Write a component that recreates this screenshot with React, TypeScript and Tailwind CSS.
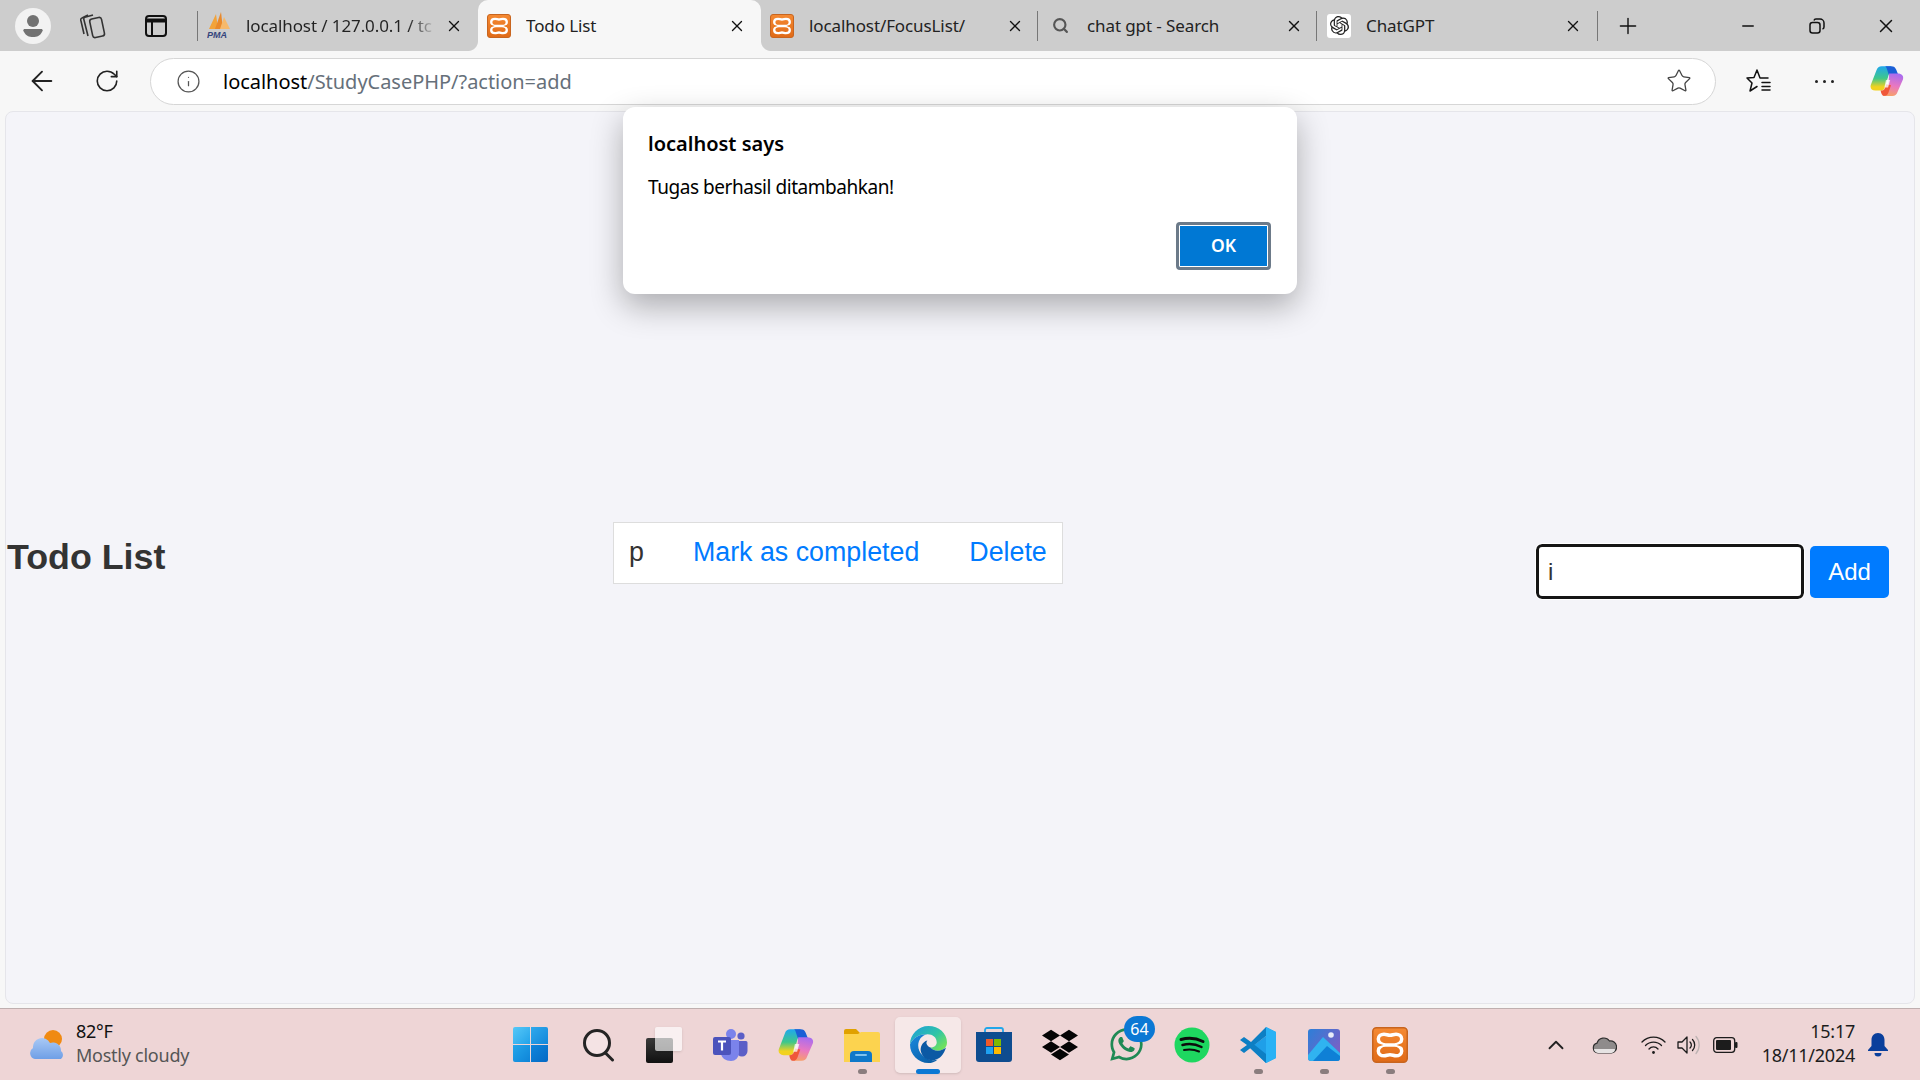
import { ArrowLeft, ChevronUp, Info, Minus, Plus, RotateCw, Search, Star, X } from "lucide-react";
import { FaDropbox, FaWhatsapp } from "react-icons/fa";
import { SiOpenai } from "react-icons/si";

const ui = "font-['Noto_Sans',sans-serif]";

const Xampp = ({ size = 24 }: { size?: number }) => (
  <svg width={size} height={size} viewBox="0 0 24 24">
    <defs>
      <linearGradient id="xampp-bg" x1="0" y1="0" x2="0" y2="1">
        <stop offset="0" stopColor="#f58a33" />
        <stop offset="1" stopColor="#e06a17" />
      </linearGradient>
    </defs>
    <rect x="0.5" y="0.5" width="23" height="23" rx="2.5" fill="url(#xampp-bg)" stroke="#c8651f" />
    <path
      d="M9 12C6 12 4.200 10 4.200 8 4.200 6 6 4.800 8 4.800c1.500 0 2.500.7 4 .7s2.500-.7 4-.7c2 0 3.800 1.200 3.800 3.200 0 2-1.800 4-4.800 4 3 0 4.800 2 4.800 4 0 2-1.800 3.200-3.800 3.200-1.500 0-2.500-.7-4-.7s-2.500.7-4 .7c-2 0-3.800-1.200-3.800-3.200 0-2 1.800-4 4.800-4Zm0 0h6"
      fill="none"
      stroke="#fff"
      strokeWidth="2.300"
      strokeLinejoin="round"
    />
    <path d="M2.500 10.300 7.600 12l-5.100 1.700ZM21.500 10.300 16.400 12l5.100 1.700Z" fill="#ea7a22" />
  </svg>
);

const Pma = () => (
  <svg width="24" height="30" viewBox="0 0 24 30">
    <path d="M2 18 9 3l2 15Z" fill="#f2a33a" />
    <path d="M8 18 14 1l2 17Z" fill="#e9892b" />
    <path d="M13 18 17 6l6 12Z" fill="#f6b96b" />
    <text x="0" y="27" fontSize="9" fontWeight="700" fontStyle="italic" fill="#35457c" fontFamily="Liberation Sans">PMA</text>
  </svg>
);

const Copilot = ({ size = 30, id }: { size?: number; id: string }) => (
  <svg width={size} height={size} viewBox="0 0 32 32">
    <defs>
      <linearGradient id={`${id}-a`} x1="0.4" y1="0" x2="0.4" y2="1">
        <stop offset="0" stopColor="#1fa7ee" />
        <stop offset="0.5" stopColor="#3fc78a" />
        <stop offset="0.85" stopColor="#f2d21f" />
      </linearGradient>
      <linearGradient id={`${id}-b`} x1="0.6" y1="0" x2="0.4" y2="1">
        <stop offset="0" stopColor="#a86cf0" />
        <stop offset="0.55" stopColor="#ea78c0" />
        <stop offset="1" stopColor="#f7a06a" />
      </linearGradient>
    </defs>
    <path d="M11 2h9l-6 20c-.8 2.500-2 3-4 3H5c-3.500 0-5.200-2.500-4.200-5.500L6 6c1-3 2.500-4 5-4Z" fill={`url(#${id}-a)`} />
    <path d="M14 2h6c2.500 0 3.800 1 4.600 3.200L27 11h-9l-2-6c-.4-1.500-1-3-2-3Z" fill="#1b5fd6" />
    <path d="M18 9h8c4 0 6 2.500 5 5.500L26 26c-1 3-2.500 4-5 4H12c2.500 0 4-1.500 4.800-4Z" fill={`url(#${id}-b)`} />
    <path d="M10 25c2.500 0 3.600-1 4.300-3l1-3 4.500 1-2.500 7c-.8 2.200-2 3-4.300 3-1.500 0-2.500-2-3-5Z" fill="#f0583a" />
    <path d="M15 15h4l-2 7h-3.500Z" fill="#fff" opacity="0.75" />
  </svg>
);

const StartIcon = () => (
  <div className="grid h-[35px] w-[35px] grid-cols-2 gap-[1px]">
    <div className="rounded-tl-[2px] bg-gradient-to-br from-[#55c8f7] to-[#1fa3ea]" />
    <div className="rounded-tr-[2px] bg-gradient-to-br from-[#2fa9ec] to-[#1187da]" />
    <div className="rounded-bl-[2px] bg-gradient-to-br from-[#24a6ea] to-[#0e84d8]" />
    <div className="rounded-br-[2px] bg-gradient-to-br from-[#0f86dc] to-[#0669c4]" />
  </div>
);

const SearchTask = () => (
  <svg width="33" height="34" viewBox="0 0 33 34" fill="none" stroke="#242424" strokeWidth="3" strokeLinecap="round">
    <circle cx="15" cy="15" r="12.500" fill="#fff" fillOpacity="0.35" />
    <path d="M24 25.500 30.500 32" />
  </svg>
);

const TaskView = () => (
  <div className="relative h-[36px] w-[36px]">
    <div className="absolute bottom-0 left-0 h-[25px] w-[27px] rounded-[2px] bg-gradient-to-b from-[#3a3a3a] to-[#111]" />
    <div className="absolute right-0 top-0 h-[24px] w-[27px] rounded-[2px] bg-white/65 shadow-sm" />
  </div>
);

const Teams = () => (
  <svg width="36" height="36" viewBox="0 0 36 36">
    <circle cx="29" cy="9" r="3.600" fill="#5b5fc7" />
    <circle cx="19" cy="7" r="5" fill="#7b83eb" />
    <path d="M24 14h10a1.500 1.500 0 0 1 1.500 1.500V24a5.500 5.500 0 0 1-11 0Z" fill="#5b5fc7" />
    <path d="M9 13h18v13a8 8 0 0 1-8 8c-5 0-10-3-10-8Z" fill="#7b83eb" />
    <rect x="1" y="10" width="18" height="18" rx="2" fill="#4b53bc" />
    <path d="M6 14.500h8M10 14.500v9" stroke="#fff" strokeWidth="2.200" />
  </svg>
);

const Explorer = () => (
  <svg width="36" height="34" viewBox="0 0 36 34">
    <path d="M0 3a2 2 0 0 1 2-2h10l4 4h18v6H0Z" fill="#e0a100" />
    <path d="M0 6h14l3-2h17a2 2 0 0 1 2 2v28H0Z" fill="#fcd34f" />
    <path d="M6 34v-7a4 4 0 0 1 4-4h14a4 4 0 0 1 4 4v7Z" fill="#0f78c9" />
    <rect x="11" y="26" width="12" height="2" rx="1" fill="#7fc2ee" />
  </svg>
);

const Edge = () => (
  <svg width="37" height="37" viewBox="0 0 36 36">
    <defs>
      <linearGradient id="edge-a" x1="0.1" y1="0" x2="1" y2="0.7">
        <stop offset="0" stopColor="#1fa0d8" />
        <stop offset="0.6" stopColor="#30c5a5" />
        <stop offset="1" stopColor="#6fe05f" />
      </linearGradient>
      <linearGradient id="edge-b" x1="0" y1="0" x2="0.7" y2="1">
        <stop offset="0" stopColor="#1a8be0" />
        <stop offset="1" stopColor="#0a5fa8" />
      </linearGradient>
    </defs>
    <path d="M18 0c10 0 18 7 18 16 0 5-4 8-9 8-3 0-6-1-7-3 3 0 6-2 6-5 0-5-4-8-9-8C9 8 3 11 0 18 0 8 8 0 18 0Z" fill="url(#edge-a)" />
    <path d="M0 18C3 11 9 8 17 8c-6 1-9 6-9 11 0 7 6 13 13 14 2 .4 4 .2 6-.5C24 35 21 36 18 36 8 36 0 28 0 18Z" fill="url(#edge-b)" />
    <path d="M20 21c1 2 4 3 7 3 3 0 6-1 8-3-2 7-6 11-11 12-5 1-11-1-13-7-2-5 1-11 6-12-2 2-1 5 3 7Z" fill="#0c59a4" />
  </svg>
);

const Store = () => (
  <svg width="36" height="36" viewBox="0 0 36 36">
    <path d="M9 7V3a2 2 0 0 1 2-2h14a2 2 0 0 1 2 2v4" fill="none" stroke="#22a7ea" strokeWidth="1.800" />
    <path d="M0 5h36v27a3 3 0 0 1-3 3H3a3 3 0 0 1-3-3Z" fill="#0e4c8f" />
    <rect x="10" y="12" width="7" height="7" fill="#f05a2a" />
    <rect x="18" y="12" width="7" height="7" fill="#7fba00" />
    <rect x="10" y="20" width="7" height="7" fill="#1ea1f2" />
    <rect x="18" y="20" width="7" height="7" fill="#fdb900" />
  </svg>
);

const Spotify = () => (
  <svg width="36" height="36" viewBox="0 0 36 36" fill="none" stroke="#0c0c0c" strokeLinecap="round">
    <circle cx="18" cy="18" r="17.500" fill="#1ed760" stroke="none" />
    <path d="M7 12.500c7-2 15-1.500 22 2" strokeWidth="3" />
    <path d="M8.500 18c6-1.500 13-1 19 2" strokeWidth="2.500" />
    <path d="M10 23c5-1 10-.8 15 1.500" strokeWidth="2" />
  </svg>
);

const VsCode = () => (
  <svg width="36" height="36" viewBox="0 0 36 36">
    <path d="M26 0 36 5v26l-10 5-16-15 16-12Z" fill="#1f9fe8" />
    <path d="M26 0v36l10-5V5Z" fill="#29b2f5" />
    <path d="M26 9 4 26l-4-3 7-5-7-5 4-3 7 5L26 0Z" fill="#0d7fc4" />
    <path d="M26 36 7 18l4-3 15 12Z" fill="#0d7fc4" />
  </svg>
);

const Photos = () => (
  <svg width="32" height="32" viewBox="0 0 32 32">
    <defs>
      <linearGradient id="photos-bg" x1="0" y1="0" x2="1" y2="0.7">
        <stop offset="0" stopColor="#2c7fd8" />
        <stop offset="1" stopColor="#7d5ec4" />
      </linearGradient>
    </defs>
    <rect width="32" height="32" rx="3" fill="url(#photos-bg)" />
    <circle cx="23" cy="6" r="2.800" fill="#e8ecf8" />
    <path d="M0 26 15 8l17 16v5a3 3 0 0 1-3 3H3a3 3 0 0 1-3-3Z" fill="#30b3f0" />
    <path d="M5 32 19 17l13 10v2a3 3 0 0 1-3 3Z" fill="#0f80d6" />
  </svg>
);

const OneDrive = () => (
  <svg width="25" height="18" viewBox="0 0 25 18">
    <path d="M6 17a5 5 0 0 1-1-9.800A7 7 0 0 1 17.500 5 5.500 5.500 0 0 1 19.500 17Z" fill="#8f8b8b" stroke="#2f2f2f" strokeWidth="1.200" />
    <path d="M2 13h21a4 4 0 0 1-3.500 4H6a4.500 4.500 0 0 1-4-4Z" fill="#e6e3e3" />
  </svg>
);

const WifiIcon = () => (
  <svg width="25" height="20" viewBox="0 0 25 20" fill="none" stroke="#1c1c1c" strokeWidth="1.300" strokeLinecap="round">
    <path d="M1 7a16 16 0 0 1 23 0" />
    <path d="M4.500 10.500a11 11 0 0 1 16 0" />
    <path d="M8 14a6 6 0 0 1 9 0" />
    <circle cx="12.500" cy="17.500" r="1.400" fill="#1c1c1c" stroke="none" />
  </svg>
);

const VolumeIcon = () => (
  <svg width="24" height="20" viewBox="0 0 24 20" fill="none" strokeLinecap="round">
    <path d="M1 7v6h4l5 5V2L5 7Z" stroke="#1c1c1c" strokeWidth="1.300" strokeLinejoin="round" />
    <path d="M13 7a4 4 0 0 1 0 6M15.500 4.500a8 8 0 0 1 0 11" stroke="#1c1c1c" strokeWidth="1.300" />
    <path d="M19 1.500a13 13 0 0 1 0 17" stroke="#bdb3b3" strokeWidth="1.300" />
  </svg>
);

const BatteryIcon = () => (
  <svg width="25" height="16" viewBox="0 0 25 16">
    <rect x="0.700" y="0.700" width="21" height="14.600" rx="3" fill="none" stroke="#1c1c1c" strokeWidth="1.300" />
    <rect x="3" y="3" width="15" height="10" rx="1" fill="#1c1c1c" />
    <rect x="22" y="5" width="2.500" height="6" rx="1" fill="#1c1c1c" />
  </svg>
);

const BellIcon = () => (
  <svg width="20" height="24" viewBox="0 0 20 24" fill="#0a3f9c">
    <path d="M10 0c4 0 6.500 3 6.500 7v6l3.500 4v1H0v-1l3.500-4V7C3.500 3 6 0 10 0Z" />
    <path d="M6.500 20h7a3.500 3.500 0 0 1-7 0Z" />
  </svg>
);

const tabs = [
  { title: "localhost / 127.0.0.1 / tc", width: "w-[280px]", icon: <Pma />, active: false, fade: true, sep: false },
  { title: "Todo List", width: "w-[283px]", icon: <Xampp />, active: true, fade: false, sep: false },
  { title: "localhost/FocusList/", width: "w-[278px]", icon: <Xampp />, active: false, fade: false, sep: false },
  {
    title: "chat gpt - Search",
    width: "w-[279px]",
    icon: <Search size={17} strokeWidth={3} color="#555" />,
    active: false,
    fade: false,
    sep: true,
  },
  {
    title: "ChatGPT",
    width: "w-[279px]",
    icon: (
      <span className="flex h-[24px] w-[24px] items-center justify-center rounded-[3px] bg-white">
        <SiOpenai size={19} color="#222" />
      </span>
    ),
    active: false,
    fade: false,
    sep: true,
  },
];

const taskIcons = [
  { key: "start", el: <StartIcon /> },
  { key: "search", el: <SearchTask /> },
  { key: "taskview", el: <TaskView /> },
  { key: "teams", el: <Teams /> },
  { key: "copilot", el: <Copilot size={36} id="copilot-task" /> },
  { key: "explorer", el: <Explorer />, dot: true },
  { key: "edge", el: <Edge />, active: true },
  { key: "store", el: <Store /> },
  { key: "dropbox", el: <FaDropbox size={36} color="#050505" /> },
  { key: "whatsapp", el: <FaWhatsapp size={37} color="#1f8a55" />, badge: "64" },
  { key: "spotify", el: <Spotify /> },
  { key: "vscode", el: <VsCode />, dot: true },
  { key: "photos", el: <Photos />, dot: true },
  { key: "xampp", el: <Xampp size={36} />, dot: true },
];

export default function App() {
  return (
    <div className={`relative flex h-screen w-screen flex-col overflow-hidden bg-[#f7f7f7] ${ui}`}>
      {/* Tab strip */}
      <div className="flex h-[51px] items-center bg-[#cdcdcd]">
        <div className="flex h-full w-[197px] items-center pl-[15px]">
          <div className="flex h-[36px] w-[36px] items-center justify-center rounded-full bg-[#f2f2f2]">
            <svg width="22" height="24" viewBox="0 0 22 24" fill="#727272">
              <circle cx="11" cy="7" r="6" />
              <path d="M2 15h18a2 2 0 0 1 0 3c-2 4-5 5-9 5s-7-1-9-5a2 2 0 0 1 0-3Z" />
            </svg>
          </div>
          <svg className="ml-[29px]" width="26" height="28" viewBox="0 0 26 28" fill="none" stroke="#333" strokeWidth="1.600">
            <rect x="11" y="6" width="12" height="19" rx="2.500" transform="rotate(-12 17 15)" />
            <path d="M8 24 4 8a2 2 0 0 1 2-3l7-2" />
            <path d="M4 22 1 9a2 2 0 0 1 1-3l6-3" />
          </svg>
          <svg className="ml-[39px]" width="22" height="22" viewBox="0 0 22 22" fill="none" stroke="#111" strokeWidth="2">
            <rect x="1" y="1" width="20" height="20" rx="3" />
            <path d="M1 5.500h20" strokeWidth="4" />
            <path d="M7 6v15" />
          </svg>
        </div>
        <div className="h-[30px] w-[1px] bg-[#777]" />
        {tabs.map((t) => (
          <div
            key={t.title}
            className={`relative flex h-full shrink-0 items-center ${t.width} ${t.active ? "rounded-t-[10px] bg-[#f7f7f7]" : ""}`}
          >
            {t.active && (
              <>
                <div className="absolute bottom-0 left-[-10px] h-[10px] w-[10px] bg-[radial-gradient(circle_at_0_0,#cdcdcd_9.500px,#f7f7f7_10.500px)]" />
                <div className="absolute bottom-0 right-[-10px] h-[10px] w-[10px] bg-[radial-gradient(circle_at_100%_0,#cdcdcd_9.500px,#f7f7f7_10.500px)]" />
              </>
            )}
            {t.sep && <div className="absolute left-[-2px] h-[30px] w-[1px] bg-[#777]" />}
            <div className="flex w-[34px] shrink-0 justify-end">
              <div className="flex w-[26px] justify-center">{t.icon}</div>
            </div>
            <span className="ml-[14px] w-[190px] overflow-hidden whitespace-nowrap text-[17px] tracking-[-0.1px] text-[#222]">
              {t.fade ? (
                <span className="block bg-gradient-to-r from-[#222] from-[85%] to-[#cdcdcd] bg-clip-text text-transparent">{t.title}</span>
              ) : (
                t.title
              )}
            </span>
            <X className="absolute right-[15px]" size={18} strokeWidth={1.8} color="#111" />
          </div>
        ))}
        <div className="h-[30px] w-[1px] bg-[#777]" />
        <Plus className="ml-[17px]" size={26} strokeWidth={1.3} color="#111" />
        <Minus className="ml-[98px]" size={18} strokeWidth={1.8} color="#111" />
        <svg className="ml-[52px]" width="16" height="16" viewBox="0 0 16 16" fill="none" stroke="#111" strokeWidth="1.500">
          <rect x="1" y="4.500" width="10" height="10.500" rx="2.500" />
          <path d="M5 2.500A2 2 0 0 1 7 1h4a4 4 0 0 1 4 4v4a2 2 0 0 1-1.500 2" />
        </svg>
        <X className="ml-[50px]" size={22} strokeWidth={1.6} color="#111" />
      </div>

      {/* Toolbar */}
      <div className="flex h-[60px] items-center">
        <ArrowLeft className="ml-[26px]" size={32} strokeWidth={1.4} color="#222" />
        <RotateCw className="ml-[36px] mr-[30px]" size={26} strokeWidth={1.5} color="#222" />
        <div className="flex h-[47px] w-[1566px] items-center rounded-full border-[1.5px] border-[#d6d6d6] bg-white">
          <Info className="ml-[25px]" size={25} strokeWidth={1.2} color="#555" />
          <span className="ml-[22px] pt-[2px] text-[20px] tracking-[-0.03px] text-[#000]">localhost</span>
          <span className="pt-[2px] text-[20px] tracking-[-0.03px] text-[#66707a]">/StudyCasePHP/?action=add</span>
          <Star className="ml-auto mr-[23px]" size={26} strokeWidth={1.2} color="#444" />
        </div>
        <svg className="ml-[30px]" width="26" height="26" viewBox="0 0 26 26" fill="none" stroke="#111" strokeWidth="1.500" strokeLinejoin="round" strokeLinecap="round">
          <path d="M22 10h-8L11 2 8 9.500 1 10l5 5-2 8 7-4.500" />
          <path d="M16 14.500h8M16 18.500h8M16 22h8" />
        </svg>
        <div className="ml-[43px] flex w-[19px] justify-between">
          <div className="h-[3px] w-[3px] rounded-full bg-[#222]" />
          <div className="h-[3px] w-[3px] rounded-full bg-[#222]" />
          <div className="h-[3px] w-[3px] rounded-full bg-[#222]" />
        </div>
        <div className="ml-[36px]">
          <Copilot size={34} id="copilot-bar" />
        </div>
      </div>

      {/* Page */}
      <div className="flex min-h-0 flex-1 px-[5px] pb-[4px]">
        <main className="flex flex-1 items-center rounded-[8px] border border-[#e5e5ea] bg-[#f4f4f9] font-['Liberation_Sans',sans-serif] text-[#333]">
          <h1 className="ml-[1px] w-[157px] whitespace-nowrap text-[35.8px] font-bold">Todo List</h1>
          <ul className="mb-[10px] ml-[449px] flex h-[62px] w-[450px] items-center border border-[#ddd] bg-white pl-[15px] text-[26.8px]">
            <li>p</li>
            <a className="ml-[49px] text-[#007bff]">Mark as completed</a>
            <a className="ml-[50px] text-[#007bff]">Delete</a>
          </ul>
          <form className="ml-auto mr-[25px] mt-[28px] flex items-center gap-[6px]">
            <div className="flex h-[55px] w-[268px] items-center rounded-[6px] border-[3px] border-[#151515] bg-white pl-[9px] text-[24px] outline outline-[1.5px] outline-white">
              i
            </div>
            <button type="button" className="h-[52px] w-[79px] rounded-[5px] bg-[#007bff] text-[24px] text-white">
              Add
            </button>
          </form>
        </main>
      </div>

      {/* Taskbar */}
      <footer className="relative flex h-[72px] items-center border-t-[1.5px] border-[#bfafaf] bg-[#eed5d6]">
        <div className="flex w-[497px] items-center pl-[28px]">
          <svg width="38" height="32" viewBox="0 0 38 32">
            <defs>
              <linearGradient id="cloud" x1="0" y1="0" x2="0" y2="1">
                <stop offset="0" stopColor="#a9c9f5" />
                <stop offset="1" stopColor="#6f9fe6" />
              </linearGradient>
            </defs>
            <circle cx="25" cy="10" r="9" fill="#f08a12" />
            <path d="M7 30a6 6 0 0 1-2-11 9 9 0 0 1 17-5 8 8 0 0 1 11 8 5 5 0 0 1 0 8Z" fill="url(#cloud)" />
          </svg>
          <div className="ml-[10px] flex flex-col pb-[3px] text-[18px] leading-[24px] tracking-[-0.25px]">
            <span className="text-[#111]">82°F</span>
            <span className="text-[#555]">Mostly cloudy</span>
          </div>
        </div>
        <div className="flex items-center">
          {taskIcons.map((t) => (
            <div
              key={t.key}
              className={`relative flex h-[56px] items-center justify-center rounded-[5px] ${t.key === "start" ? "w-[68px] pr-[2px]" : "w-[66px]"} ${t.active ? "bg-white/45 shadow-sm" : ""}`}
            >
              {t.el}
              {t.badge && (
                <span className="absolute left-[31px] top-[-1px] flex h-[26px] w-[31px] items-center justify-center rounded-full bg-[#0b78d4] text-[16px] text-white">
                  {t.badge}
                </span>
              )}
              {t.dot && <div className="absolute bottom-[-1px] h-[5px] w-[9px] rounded-full bg-[#8a7d7e]" />}
              {t.active && <div className="absolute bottom-[-1px] h-[5px] w-[24px] rounded-full bg-[#0b78d4]" />}
            </div>
          ))}
        </div>
        <div className="ml-auto flex items-center pr-[32px]">
          <ChevronUp size={26} strokeWidth={1.7} color="#222" />
          <div className="ml-[23px]"><OneDrive /></div>
          <div className="ml-[24px]"><WifiIcon /></div>
          <div className="ml-[11px]"><VolumeIcon /></div>
          <div className="ml-[12px]"><BatteryIcon /></div>
          <div className="ml-[24px] flex flex-col items-end pb-[3px] text-[18px] leading-[24px] tracking-[-0.25px] text-[#1c1c1c]">
            <span>15:17</span>
            <span>18/11/2024</span>
          </div>
          <div className="ml-[13px]"><BellIcon /></div>
        </div>
      </footer>

      {/* JS alert */}
      <div className="absolute left-[623px] top-[107px] flex h-[187px] w-[674px] flex-col rounded-[12px] bg-white pl-[25px] pr-[26px] shadow-[0_12px_32px_rgba(0,0,0,0.3)]">
        <h2 className="mt-[23px] text-[20px] font-semibold leading-[28px] text-black">localhost says</h2>
        <p className="mt-[15px] text-[19px] leading-[28px] tracking-[-0.45px] text-black">Tugas berhasil ditambahkan!</p>
        <div className="mb-[24px] mt-auto flex justify-end">
          <button
            type="button"
            className="h-[48px] w-[95px] rounded-[4px] border-[3px] border-[#6c7a89] bg-[#0078d4] pb-[2px] text-[17.5px] font-semibold text-white shadow-[inset_0_0_0_1px_#fff]"
          >
            OK
          </button>
        </div>
      </div>
    </div>
  );
}
